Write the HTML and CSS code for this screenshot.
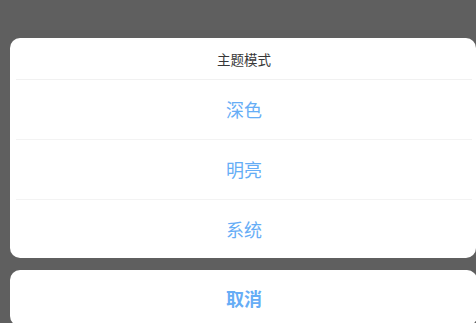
FILE: index.html
```html
<!DOCTYPE html>
<html lang="zh">
<head>
<meta charset="utf-8">
<link rel="stylesheet" href="styles.css">
</head>
<body>
<div class="sheet">
  <div class="card">
    <div class="title">主题模式</div>
    <div class="option">深色</div>
    <div class="option">明亮</div>
    <div class="option last">系统</div>
  </div>
  <div class="card cancel">取消</div>
</div>
</body>
</html>
```
FILE: styles.css
```css
html, body {
  margin: 0;
  padding: 0;
  background: #5f5f5f;
  height: 100%;
  overflow: hidden;
  font-family: "Noto Sans CJK SC", "Noto Sans", sans-serif;
}
.sheet {
  padding: 38px 0 0 10px;
  display: flex;
  flex-direction: column;
  gap: 12px;
}
.card {
  width: 466px;
  background: #ffffff;
  border-radius: 10px;
  display: flex;
  flex-direction: column;
}
.title {
  height: 42px;
  display: flex;
  align-items: center;
  justify-content: center;
  font-size: 13.5px;
  color: #383838;
  border-bottom: 1px solid #f1f1f1;
  margin: 0 4px 0 6px;
  box-sizing: border-box;
}
.option {
  height: 59px;
  display: flex;
  align-items: center;
  justify-content: center;
  font-size: 18px;
  color: #66adf6;
  border-bottom: 1px solid #f3f3f3;
  margin: 0 4px 0 6px;
  padding-bottom: 1px;
  box-sizing: border-box;
  height: 60px;
}
.option.last {
  border-bottom: none;
  height: 58px;
}
.cancel {
  height: 56px;
  align-items: center;
  justify-content: center;
  font-size: 18px;
  font-weight: bold;
  color: #66adf6;
  padding-left: 1px;
}
```
